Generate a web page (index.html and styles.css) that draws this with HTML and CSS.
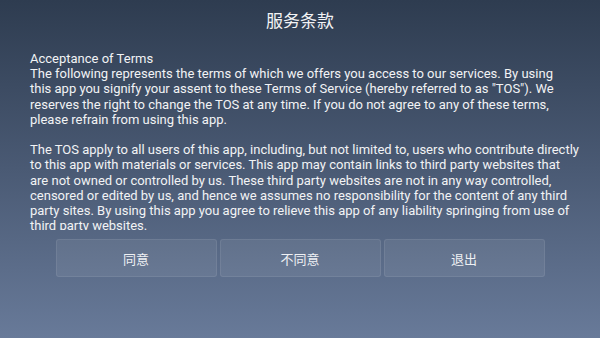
FILE: index.html
```html
<!DOCTYPE html>
<html lang="zh">
<head>
  <meta charset="UTF-8">
  <meta name="viewport" content="width=device-width, initial-scale=1.0">
  <title>服务条款</title>
  <link rel="stylesheet" href="styles.css">
</head>
<body>
  <div class="tos-page">
    <h1 class="tos-title">服务条款</h1>

    <!-- Isi syarat layanan, baris dipotong seperti di aplikasi -->
    <div class="tos-content">
      <p>Acceptance of Terms<br>
      The following represents the terms of which we offers you access to our services. By using<br>
      this app you signify your assent to these Terms of Service (hereby referred to as "TOS"). We<br>
      reserves the right to change the TOS at any time. If you do not agree to any of these terms,<br>
      please refrain from using this app.</p>
      <p>The TOS apply to all users of this app, including, but not limited to, users who contribute directly<br>
      to this app with materials or services. This app may contain links to third party websites that<br>
      are not owned or controlled by us. These third party websites are not in any way controlled,<br>
      censored or edited by us, and hence we assumes no responsibility for the content of any third<br>
      party sites. By using this app you agree to relieve this app of any liability springing from use of<br>
      third party websites.</p>
    </div>

    <div class="tos-buttons">
      <button class="button">同意</button>
      <button class="button">不同意</button>
      <button class="button">退出</button>
    </div>
  </div>
</body>
</html>
```

FILE: styles.css
```css
html, body {
  margin: 0;
  padding: 0;
  height: 100%;
}

body {
  font-family: Roboto, "Noto Sans CJK SC", sans-serif;
  color: #f2f3f5;
  background: linear-gradient(to bottom, #2e3c50 0%, #4a5a74 50%, #687a99 100%);
  overflow: hidden;
}

.tos-page {
  display: flex;
  flex-direction: column;
  height: 338px;
}

.tos-title {
  margin: 0;
  height: 44px;
  line-height: 42px;
  text-align: center;
  font-size: 17px;
  font-weight: normal;
}

.tos-content {
  height: 179px;
  margin-top: 7px;
  padding: 0 6px 0 30px;
  overflow: hidden;
  font-size: 13px;
  line-height: 15.2px;
}

.tos-content p {
  margin: 0 0 15.2px 0;
}

.tos-buttons {
  display: flex;
  justify-content: center;
  gap: 3px;
  margin-top: 9px;
}

.button {
  width: 161px;
  height: 38px;
  background-color: rgba(255, 255, 255, 0.07);
  border: 1px solid rgba(255, 255, 255, 0.08);
  border-radius: 3px;
  color: #eef0f3;
  font-family: "Noto Sans CJK SC", sans-serif;
  font-size: 13px;
  cursor: pointer;
}
```
